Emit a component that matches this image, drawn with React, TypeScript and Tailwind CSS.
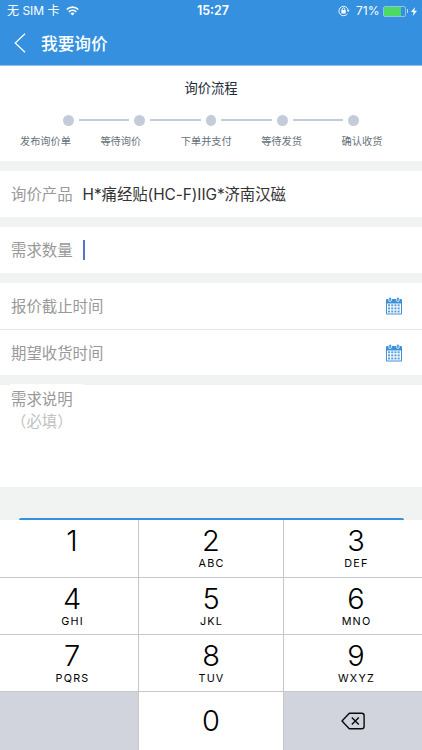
import { useState } from "react";
import { clsx } from "clsx";

const STEPS = ["发布询价单", "等待询价", "下单并支付", "等待发货", "确认收货"];

const KEYS = [
  { digit: "1", letters: "" },
  { digit: "2", letters: "ABC" },
  { digit: "3", letters: "DEF" },
  { digit: "4", letters: "GHI" },
  { digit: "5", letters: "JKL" },
  { digit: "6", letters: "MNO" },
  { digit: "7", letters: "PQRS" },
  { digit: "8", letters: "TUV" },
  { digit: "9", letters: "WXYZ" },
];

function WifiIcon() {
  return (
    <svg width="13" height="10" viewBox="0 0 13 10" fill="none" stroke="#fff" strokeWidth="1.7">
      <path d="M0.7 3.5a8.4 8.4 0 0 1 11.6 0" />
      <path d="M2.8 5.9a5.4 5.4 0 0 1 7.4 0" />
      <path d="M6.5 9.6 4.5 7.5a3 3 0 0 1 4 0z" fill="#fff" stroke="none" />
    </svg>
  );
}

function RotationLockIcon() {
  return (
    <svg width="12" height="12" viewBox="0 0 12 12" fill="none" stroke="#fff" strokeWidth="0.9">
      <path d="M9.4 8.8A4.7 4.7 0 1 1 10.2 5" />
      <path d="M8.6 5.2h3L10.2 7z" fill="#fff" stroke="none" />
      <rect x="3.3" y="5" width="4.4" height="3.5" rx="0.4" fill="#fff" stroke="none" />
      <path d="M4.2 5.3V4.2a1.3 1.3 0 0 1 2.6 0v1.1" />
    </svg>
  );
}

function CalendarIcon() {
  return (
    <svg width="16" height="18" viewBox="0 0 16 18" className="shrink-0">
      <rect y="2" width="16" height="15.5" rx="1" fill="#3d91da" />
      <rect x="1" y="6.5" width="14" height="10" fill="#fff" />
      <g fill="#3d91da" stroke="#fff" strokeWidth="0.8">
        <rect x="2.8" y="0.2" width="2.6" height="4.2" rx="1.1" />
        <rect x="10.6" y="0.2" width="2.6" height="4.2" rx="1.1" />
      </g>
      <g fill="#5b9fda">
        {[7.3, 10.4, 13.5].map((y) =>
          [2, 5.2, 8.4, 11.6].map((x) => <rect key={`${x}-${y}`} x={x} y={y} width="2.1" height="2" />)
        )}
      </g>
    </svg>
  );
}

function BackspaceIcon() {
  return (
    <svg width="24" height="18" viewBox="0 0 24 18" fill="none" stroke="#0b0b0d" strokeWidth="1.4" strokeLinejoin="round">
      <path d="M8.3 1.2h12.5a2.3 2.3 0 0 1 2.3 2.3v11a2.3 2.3 0 0 1-2.3 2.3H8.3L1 9z" />
      <path d="M10.8 5.4 17.8 12.6M17.8 5.4 10.8 12.6" />
    </svg>
  );
}

function StatusBar() {
  return (
    <div className="grid h-[22px] grid-cols-3 items-center pr-[5px] pl-[7px] text-[12px] leading-none">
      <div className="flex items-center gap-[6px]">
        <span>无 SIM 卡</span>
        <WifiIcon />
      </div>
      <div className="pl-[2px] text-center text-[12.5px] font-semibold">15:27</div>
      <div className="flex items-center justify-end">
        <RotationLockIcon />
        <span className="ml-[6px]">71%</span>
        <span className="ml-[3px] flex h-[11px] w-[23px] rounded-[2px] border border-[#8ec2ee]">
          <span className="w-[17px] rounded-l-[1px] bg-[#4cd964]" />
        </span>
        <span className="ml-px h-1 w-[1.5px] bg-[#b9daf5]" />
        <svg width="6" height="9" viewBox="0 0 6 9" fill="#fff" className="ml-[3px]">
          <path d="M4 0 0 5h2.6L1.8 9 6 3.8H3.3z" />
        </svg>
      </div>
    </div>
  );
}

function DateRow({ label }: { label: string }) {
  return (
    <div className="flex h-[46px] items-center justify-between pr-5 pl-[11px]">
      <span className="pt-[2px]">{label}</span>
      <CalendarIcon />
    </div>
  );
}

export default function App() {
  const [quantity, setQuantity] = useState("");

  const press = (digit: string) => setQuantity((q) => q + digit);

  return (
    <div className="flex h-[750px] w-[422px] flex-col overflow-hidden bg-[#f1f3f3] font-[Inter,'Noto_Sans_CJK_SC',sans-serif] text-[15.4px] text-[#999]">
      {/* Header */}
      <header className="h-[66px] shrink-0 border-b border-[#8fc4f0] bg-[#3590df] text-white">
        <StatusBar />
        <div className="flex h-[42px] items-center pl-[14px]">
          <svg width="12" height="20" viewBox="0 0 12 20" fill="none" stroke="#fff" strokeWidth="1.2">
            <path d="M11 0.7 1.2 10 11 19.3" />
          </svg>
          <h1 className="ml-[15px] pt-[3px] text-[16.7px] font-medium">我要询价</h1>
        </div>
      </header>

      {/* Steps */}
      <section className="h-[95px] shrink-0 bg-white pt-[12px]">
        <h2 className="text-center text-[13.3px] leading-5 text-[#222b38]">询价流程</h2>
        <div className="mt-[17px] flex items-center justify-center gap-[5px]">
          {STEPS.map((step, i) => (
            <div key={step} className="flex items-center gap-[5px]">
              {i > 0 && <span className="h-[2px] w-[50.8px] bg-[#c4ccda]" />}
              <span className="size-[10.5px] rounded-full bg-[#c4ccda]" />
            </div>
          ))}
        </div>
        <div className="mt-[7px] grid grid-cols-5 pl-5 text-[10.2px] leading-4 text-[#66707a]">
          {STEPS.map((step) => (
            <span key={step}>{step}</span>
          ))}
        </div>
      </section>

      {/* Form */}
      <section className="mt-[10px] flex h-[46px] shrink-0 items-center bg-white pl-[11px]">
        <span className="pt-[2px]">询价产品</span>
        <span className="ml-[10px] pt-[2px] tracking-[-0.06px] text-[#333]">H*痛经贴(HC-F)IIG*济南汉磁</span>
      </section>

      <section className="mt-[10px] flex h-[46px] shrink-0 items-center bg-white pl-[11px]">
        <span className="pt-[2px]">需求数量</span>
        <span className="ml-[10px] text-[#333]">{quantity}</span>
        <span className="h-5 w-[2px] bg-[#5574cc]" />
      </section>

      <section className="mt-[10px] h-[92px] shrink-0 bg-white">
        <DateRow label="报价截止时间" />
        <div className="border-t border-[#e6e7e7]">
          <DateRow label="期望收货时间" />
        </div>
      </section>

      <section className="mt-[10px] h-[102px] shrink-0 bg-white">
        <div className="-mt-px ml-[10px] w-[74px] rounded-t-[2px] bg-white pt-[3px] pl-px leading-[26px]">需求说明</div>
        <div className="-mt-px pl-[11px] leading-5 text-[#c2c2c2]">（必填）</div>
      </section>

      <div className="flex h-[33px] shrink-0 items-end overflow-hidden px-[18.5px]">
        <div className="h-[2.5px] w-full rounded-t-[3px] bg-[#3590df]" />
      </div>

      {/* Keypad */}
      <div className="grid flex-1 grid-cols-[138px_144px_138px] grid-rows-[57px_56px_56px_58px] gap-px bg-[#c6c7ca] text-black">
        {KEYS.map(({ digit, letters }, i) => (
          <button
            key={digit}
            onClick={() => press(digit)}
            className={clsx("flex flex-col items-center bg-white pt-[4px]", i % 3 !== 1 && "pl-[6px]")}
          >
            <span className="text-[29px] leading-[34px] font-[350]">{digit}</span>
            <span className="pl-px text-[10.8px] leading-3 tracking-[1.2px]">{letters}</span>
          </button>
        ))}
        <div className="bg-[#d1d4dc]" />
        <button onClick={() => press("0")} className="bg-white text-[29px] font-[350]">
          0
        </button>
        <button
          onClick={() => setQuantity((q) => q.slice(0, -1))}
          className="flex items-center justify-center bg-[#d1d4dc]"
        >
          <BackspaceIcon />
        </button>
      </div>
    </div>
  );
}
